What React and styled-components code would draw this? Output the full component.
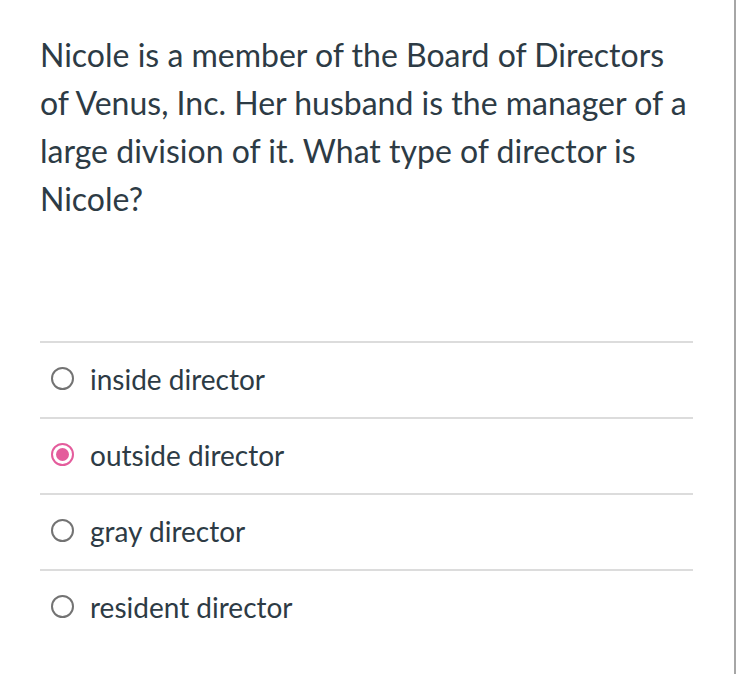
import React, { useState } from "react";
import styled, { createGlobalStyle } from "styled-components";

const GlobalStyle = createGlobalStyle`
  html, body {
    margin: 0;
    padding: 0;
    background: #ffffff;
  }
  body {
    font-family: Lato, "Noto Sans", "Liberation Sans", sans-serif;
    color: #2d3b45;
  }
`;

const Page = styled.div`
  width: 734px;
  min-height: 674px;
  border-right: 2px solid #a6a6a6;
  box-sizing: content-box;
`;

const Content = styled.div`
  padding: 31px 0 0 40px;
  width: 653px;
`;

const Question = styled.p`
  margin: 0 0 118px;
  font-size: 32px;
  line-height: 48px;
`;

const Options = styled.ul`
  list-style: none;
  margin: 0;
  padding: 0;
`;

const OptionRow = styled.li`
  display: flex;
  align-items: center;
  gap: 16px;
  height: 71px;
  padding: 0 0 3px 11px;
  border-top: 2px solid #dcdcdc;
  cursor: pointer;
`;

const Radio = styled.span`
  width: 23px;
  height: 23px;
  border-radius: 50%;
  box-sizing: border-box;
  border: 2px solid ${(p) => (p.$checked ? "#e45c9c" : "#737373")};
  display: flex;
  align-items: center;
  justify-content: center;
  flex-shrink: 0;
  &::after {
    content: "";
    width: 13px;
    height: 13px;
    border-radius: 50%;
    background: ${(p) => (p.$checked ? "#e45c9c" : "transparent")};
  }
`;

const Label = styled.span`
  font-size: 28px;
  line-height: 34px;
  color: #2d3b45;
`;

const answers = ["inside director", "outside director", "gray director", "resident director"];

export default function App() {
  const [selected, setSelected] = useState(1);
  return (
    <>
      <GlobalStyle />
      <Page>
        <Content>
          <Question>
            Nicole is a member of the Board of Directors of Venus, Inc. Her husband is the
            manager of a large division of it. What type of director is Nicole?
          </Question>
          <Options>
            {answers.map((a, i) => (
              <OptionRow key={a} onClick={() => setSelected(i)}>
                <Radio $checked={selected === i} />
                <Label>{a}</Label>
              </OptionRow>
            ))}
          </Options>
        </Content>
      </Page>
    </>
  );
}
